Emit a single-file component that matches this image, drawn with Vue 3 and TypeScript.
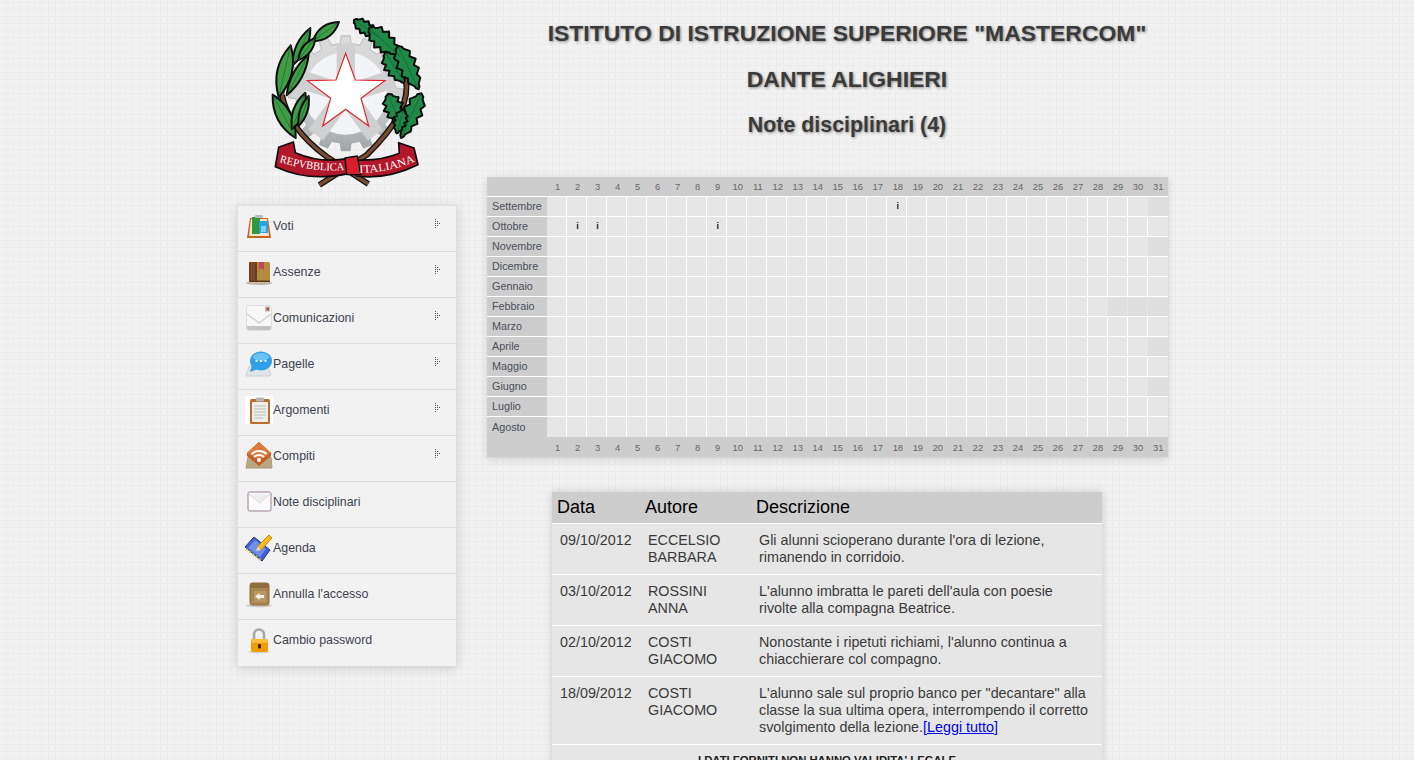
<script setup lang="ts">
type Leaf = [number, number, number, number, number];

const months: { name: string; marks: number[]; missing: number[] }[] = [
  { name: 'Settembre', marks: [18], missing: [31] },
  { name: 'Ottobre', marks: [2, 3, 9], missing: [] },
  { name: 'Novembre', marks: [], missing: [31] },
  { name: 'Dicembre', marks: [], missing: [] },
  { name: 'Gennaio', marks: [], missing: [] },
  { name: 'Febbraio', marks: [], missing: [29, 30, 31] },
  { name: 'Marzo', marks: [], missing: [] },
  { name: 'Aprile', marks: [], missing: [31] },
  { name: 'Maggio', marks: [], missing: [] },
  { name: 'Giugno', marks: [], missing: [31] },
  { name: 'Luglio', marks: [], missing: [] },
  { name: 'Agosto', marks: [], missing: [] },
];
const days = Array.from({ length: 31 }, (_, i) => i + 1);

const menu = [
  { label: 'Voti', icon: 'voti', arrow: true },
  { label: 'Assenze', icon: 'assenze', arrow: true },
  { label: 'Comunicazioni', icon: 'comunicazioni', arrow: true },
  { label: 'Pagelle', icon: 'pagelle', arrow: true },
  { label: 'Argomenti', icon: 'argomenti', arrow: true },
  { label: 'Compiti', icon: 'compiti', arrow: true },
  { label: 'Note disciplinari', icon: 'note', arrow: false },
  { label: 'Agenda', icon: 'agenda', arrow: false },
  { label: "Annulla l'accesso", icon: 'annulla', arrow: false },
  { label: 'Cambio password', icon: 'password', arrow: false },
];

const notes = [
  { date: '09/10/2012', author: ['ECCELSIO', 'BARBARA'], text: "Gli alunni scioperano durante l'ora di lezione, rimanendo in corridoio.", more: false },
  { date: '03/10/2012', author: ['ROSSINI', 'ANNA'], text: "L'alunno imbratta le pareti dell'aula con poesie rivolte alla compagna Beatrice.", more: false },
  { date: '02/10/2012', author: ['COSTI', 'GIACOMO'], text: "Nonostante i ripetuti richiami, l'alunno continua a chiacchierare col compagno.", more: false },
  { date: '18/09/2012', author: ['COSTI', 'GIACOMO'], text: 'L\'alunno sale sul proprio banco per "decantare" alla classe la sua ultima opera, interrompendo il corretto svolgimento della lezione.', more: true },
];

function polar(cx: number, cy: number, r: number, deg: number): string {
  const a = (deg * Math.PI) / 180;
  return `${(cx + r * Math.sin(a)).toFixed(1)},${(cy - r * Math.cos(a)).toFixed(1)}`;
}

const gearPath = (() => {
  const cx = 347, cy = 280, teeth = 16, ro = 173, ri = 150;
  const step = 360 / teeth;
  let d = '';
  for (let i = 0; i < teeth; i++) {
    const a = i * step;
    const pts = [
      polar(cx, cy, ri, a - step * 0.5),
      polar(cx, cy, ri, a - step * 0.28),
      polar(cx, cy, ro, a - step * 0.2),
      polar(cx, cy, ro, a + step * 0.2),
      polar(cx, cy, ri, a + step * 0.28),
    ];
    d += (i === 0 ? 'M' : 'L') + pts.join(' L');
  }
  return d + 'Z';
})();

const rayAngles = [0, 72, 144, 216, 288];

function oliveLeaf([x1, y1, x2, y2, w]: Leaf): string {
  const mx = (x1 + x2) / 2, my = (y1 + y2) / 2;
  const dx = x2 - x1, dy = y2 - y1, l = Math.hypot(dx, dy);
  const nx = (-dy / l) * w, ny = (dx / l) * w;
  return `M${x1},${y1} Q${mx + nx},${my + ny} ${x2},${y2} Q${mx - nx},${my - ny} ${x1},${y1}Z`;
}

function oakLeaf([x1, y1, x2, y2, w]: Leaf): string {
  const dx = x2 - x1, dy = y2 - y1, l = Math.hypot(dx, dy);
  const ux = dx / l, uy = dy / l, nx = -uy, ny = ux;
  const n = 20;
  const side = (s: number) => {
    const out: string[] = [];
    for (let i = 0; i <= n; i++) {
      const t = i / n;
      const env = Math.pow(Math.sin(Math.PI * Math.pow(t, 0.8)), 0.7);
      const lobe = 0.8 + 0.2 * Math.cos(t * Math.PI * 10);
      const h = (w / 2) * env * lobe * s;
      out.push(`${(x1 + dx * t + nx * h).toFixed(1)},${(y1 + dy * t + ny * h).toFixed(1)}`);
    }
    return out;
  };
  const a = side(1), b = side(-1).reverse();
  return 'M' + a.concat(b).join(' L') + 'Z';
}

const olives: Leaf[] = [
  [248, 124, 327, 66, 34],
  [188, 195, 241, 84, 30],
  [205, 180, 256, 114, 26],
  [146, 292, 182, 136, 44],
  [170, 286, 236, 164, 28],
  [197, 414, 128, 284, 42],
  [186, 388, 226, 278, 32],
  [206, 378, 236, 288, 22],
];
const oaks: Leaf[] = [
  [372, 60, 450, 114, 44],
  [418, 84, 510, 170, 66],
  [466, 158, 522, 248, 62],
  [503, 138, 566, 268, 64],
  [474, 282, 514, 380, 62],
  [574, 280, 513, 414, 60],
  [520, 330, 500, 400, 44],
];
const olivePaths = olives.map(oliveLeaf);
const oakPaths = oaks.map(oakLeaf);
const oliveRibs = olives.map(([a, b, c, d]) => `M${a},${b} L${c},${d}`);
const oakRibs = oaks.map(([a, b, c, d]) => `M${a},${b} L${c},${d}`);
</script>

<template>
  <div class="page">
    <aside class="side">
      <div class="logo">
        <svg class="emblem" viewBox="0 0 720 600" width="240" height="200" role="img" aria-label="Emblema della Repubblica Italiana">
          <defs>
            <linearGradient id="gearFill" x1="0" y1="0" x2="0" y2="1">
              <stop offset="0" stop-color="#dcdcdc" />
              <stop offset="0.6" stop-color="#cfd0d1" />
              <stop offset="1" stop-color="#9fa5a8" />
            </linearGradient>
            <path id="ribbonLeft" d="M148,486 Q250,518 346,510" />
            <path id="ribbonRight" d="M388,518 Q480,518 556,484" />
          </defs>
          <path :d="gearPath" fill="url(#gearFill)" stroke="#8e9093" stroke-width="1.5" />
          <circle cx="347" cy="280" r="124" fill="#f3f4f7" />
          <rect
            v-for="a in rayAngles"
            :key="a"
            x="320"
            y="130"
            width="55"
            height="152"
            fill="#cfd0d2"
            :transform="`rotate(${a} 347 282)`"
          />
          <polygon points="347,160 376,240 465,242 393,295 416,378 347,328 278,378 302,295 232,242 318,240" fill="#fff" stroke="#e0222c" stroke-width="3.5" />
          <path d="M156,285 Q175,385 290,470 L415,552" fill="none" stroke="#111" stroke-width="18" />
          <path d="M156,285 Q175,385 290,470 L415,552" fill="none" stroke="#7b4a32" stroke-width="10" />
          <path d="M526,235 Q550,330 410,465 L268,555" fill="none" stroke="#111" stroke-width="18" />
          <path d="M526,235 Q550,330 410,465 L268,555" fill="none" stroke="#7b4a32" stroke-width="10" />
          <path d="M160,285 Q170,200 250,115" fill="none" stroke="#6d4a30" stroke-width="5" />
          <path v-for="(p, i) in olivePaths" :key="'o' + i" :d="p" fill="#3f9e45" stroke="#0c0c0c" stroke-width="6" stroke-linejoin="round" />
          <path v-for="(p, i) in oliveRibs" :key="'or' + i" :d="p" stroke="#1c5d28" stroke-width="2" />
          <path v-for="(p, i) in oakPaths" :key="'a' + i" :d="p" fill="#1f8a47" stroke="#0c0c0c" stroke-width="6" stroke-linejoin="round" />
          <path v-for="(p, i) in oakRibs" :key="'ar' + i" :d="p" stroke="#0f5a2d" stroke-width="2" />
          <path d="M136,500 L146,442 L190,426 L196,458 Q270,490 352,476 L358,520 Q240,548 136,500Z" fill="#b3172a" stroke="#0c0c0c" stroke-width="5" stroke-linejoin="round" />
          <path d="M378,480 Q450,484 508,460 L506,428 L552,444 L564,494 Q470,540 378,528Z" fill="#b3172a" stroke="#0c0c0c" stroke-width="5" stroke-linejoin="round" />
          <path d="M345,474 L382,468 L392,524 L350,524 Z" fill="#d81f2e" stroke="#0c0c0c" stroke-width="4" stroke-linejoin="round" />
          <text class="motto"><textPath href="#ribbonLeft" textLength="198" lengthAdjust="spacingAndGlyphs">REPVBBLICA</textPath></text>
          <text class="motto"><textPath href="#ribbonRight" textLength="172" lengthAdjust="spacingAndGlyphs">ITALIANA</textPath></text>
        </svg>
      </div>

      <nav class="menu">
        <a v-for="item in menu" :key="item.label" class="menu-item">
          <svg class="icon" viewBox="0 0 28 28" width="28" height="28" aria-hidden="true">
            <template v-if="item.icon === 'voti'">
              <path d="M5,6 H23 L26,26 H2 Z" fill="#c9621a" />
              <path d="M6,7 H22 L24,24 H4 Z" fill="#f2e6d4" />
              <rect x="7" y="5" width="8" height="17" fill="#2f9a3d" />
              <rect x="14" y="9" width="9" height="12" fill="#28a3e0" />
              <rect x="16" y="14" width="5" height="6" fill="#7fd0f2" />
              <rect x="10" y="3" width="8" height="3" rx="1" fill="#b9bcbe" />
            </template>
            <template v-else-if="item.icon === 'assenze'">
              <ellipse cx="14" cy="25" rx="13" ry="2" fill="#c4b8ab" />
              <rect x="4" y="4" width="21" height="20" rx="2" fill="#b48a3e" />
              <rect x="4" y="4" width="8" height="20" rx="1" fill="#6a3d20" />
              <path d="M6.5,4 V24 M9,4 V24" stroke="#8f6338" />
              <path d="M14,4 H19 V12 L16.5,10 L14,12 Z" fill="#c2455a" />
              <rect x="5" y="22.5" width="20" height="1.5" fill="#5a3a1e" />
            </template>
            <template v-else-if="item.icon === 'comunicazioni'">
              <rect x="1.5" y="1.5" width="25" height="25" rx="3" fill="#f7f7f7" stroke="#dddddd" />
              <path d="M2,22 H26 V24 Q26,26 24,26 H4 Q2,26 2,24 Z" fill="#c4c4c4" />
              <path d="M2,10 L14,19 L26,10" fill="none" stroke="#cfcfcf" stroke-width="1.2" />
              <rect x="20" y="2.5" width="5" height="5" fill="#c4beb8" />
              <rect x="21.5" y="3.5" width="2.5" height="3" fill="#a2573f" />
            </template>
            <template v-else-if="item.icon === 'pagelle'">
              <path d="M4,16 H22 L26,24 Q26,26 24,26 H1 Z" fill="#e2e5e8" stroke="#cdd0d3" />
              <ellipse cx="16" cy="11" rx="11" ry="9.5" fill="#2f9fe6" />
              <ellipse cx="16" cy="7" rx="8" ry="4" fill="#6cc3f3" />
              <path d="M7,15 L5,22 L13,19 Z" fill="#2f9fe6" />
              <circle cx="11.5" cy="11" r="1.1" fill="#fff" />
              <circle cx="16" cy="11" r="1.1" fill="#fff" />
              <circle cx="20.5" cy="11" r="1.1" fill="#fff" />
            </template>
            <template v-else-if="item.icon === 'argomenti'">
              <rect width="28" height="28" fill="#fff" />
              <rect x="5" y="3" width="20" height="25" rx="1.5" fill="#b9702d" />
              <rect x="7" y="6" width="16" height="20" fill="#eeeeea" />
              <path d="M9,10 H21 M9,13 H21 M9,16 H21 M9,19 H21 M9,22 H18" stroke="#bdbdb8" />
              <rect x="11" y="1.5" width="8" height="4" rx="1" fill="#b4b4b4" />
            </template>
            <template v-else-if="item.icon === 'compiti'">
              <path d="M3,15 H26 L27,26 H1 Z" fill="#b9a683" stroke="#a99a78" />
              <path d="M14,0 L26,11 V14 L14,24 L2,14 V11 Z" fill="#c2602a" />
              <path d="M14,0 L26,11 L14,18 L2,11 Z" fill="#dd7a3a" />
              <path d="M6.5,12 A11,11 0 0 1 21.5,12 M9,15 A7,7 0 0 1 19,15" fill="none" stroke="#fff" stroke-width="2" />
              <circle cx="14" cy="18" r="2" fill="#fff" />
            </template>
            <template v-else-if="item.icon === 'note'">
              <rect x="3" y="4" width="23" height="19" rx="2" fill="#fbfbfb" stroke="#cfcfcf" />
              <rect x="3" y="4" width="23" height="19" rx="2" fill="none" stroke="#9db7d2" stroke-width="1.4" stroke-dasharray="2 2" />
              <rect x="3" y="4" width="23" height="19" rx="2" fill="none" stroke="#d49a9a" stroke-width="1.4" stroke-dasharray="2 2" stroke-dashoffset="2" />
              <path d="M4,6 L14.5,15 L25,6" fill="#efefef" stroke="#dadada" />
            </template>
            <template v-else-if="item.icon === 'agenda'">
              <path d="M0,13 L9,3 L25,16 L17,27 Z" fill="#3f63d3" stroke="#1c3489" />
              <path d="M3,14 L10,6 L21,15 L15,23 Z" fill="#6f8fe8" />
              <path d="M1,15 L17,27" stroke="#e2c33c" stroke-width="2" stroke-dasharray="2 2" />
              <path d="M13,12 L24,1 L27,4 L16,16 Z" fill="#f7b91c" stroke="#c98a0a" />
              <path d="M13,12 L16,16 L11,17 Z" fill="#f0d9a8" />
            </template>
            <template v-else-if="item.icon === 'annulla'">
              <ellipse cx="14" cy="25.5" rx="13" ry="1.8" fill="#cfcac3" />
              <rect x="5" y="3" width="19" height="22" rx="2.5" fill="#a9854f" stroke="#8a683a" />
              <rect x="5" y="3" width="19" height="5" rx="2" fill="#8f6d3d" />
              <rect x="9" y="11" width="12" height="11" fill="#b99866" />
              <path d="M10,16.5 L14.5,13 V15 H19 V18 H14.5 V20 Z" fill="#f4f1e8" />
            </template>
            <template v-else>
              <ellipse cx="14" cy="26" rx="11" ry="1.5" fill="#d5d5d5" />
              <path d="M9,14 V8.5 A5,5 0 0 1 19,8.5 V14" fill="none" stroke="#a8a8a8" stroke-width="2.6" />
              <rect x="6" y="13" width="17" height="13" rx="2" fill="#f29b0c" />
              <rect x="6" y="13" width="17" height="4" rx="2" fill="#fbbd3a" />
              <rect x="13" y="18" width="3" height="4.5" rx="1" fill="#3a2a10" />
            </template>
          </svg>
          <span class="menu-label">{{ item.label }}</span>
          <svg v-if="item.arrow" class="arrow" viewBox="0 0 6 10" width="6" height="10" aria-hidden="true">
            <path d="M0,0h1v1h-1zM0,2h1v1h-1zM0,4h1v1h-1zM0,6h1v1h-1zM0,8h1v1h-1zM2,2h1v1h-1zM2,4h1v1h-1zM2,6h1v1h-1zM4,4h1v1h-1z" fill="#555" />
          </svg>
        </a>
      </nav>
    </aside>

    <main class="content">
      <header class="titles">
        <h1>ISTITUTO DI ISTRUZIONE SUPERIORE "MASTERCOM"</h1>
        <h1>DANTE ALIGHIERI</h1>
        <h2>Note disciplinari (4)</h2>
      </header>

      <table class="calendar">
        <thead>
          <tr>
            <th class="corner"></th>
            <th v-for="d in days" :key="d">{{ d }}</th>
          </tr>
        </thead>
        <tbody>
          <tr v-for="m in months" :key="m.name">
            <th class="month">{{ m.name }}</th>
            <td
              v-for="d in days"
              :key="d"
              :class="{ missing: m.missing.includes(d), 'before-missing': m.missing.includes(d + 1) }"
            >
              <span v-if="m.marks.includes(d)" class="mark">i</span>
            </td>
          </tr>
        </tbody>
        <tfoot>
          <tr>
            <th class="corner"></th>
            <th v-for="d in days" :key="d">{{ d }}</th>
          </tr>
        </tfoot>
      </table>

      <table class="notes">
        <colgroup>
          <col class="c-date" />
          <col class="c-author" />
          <col class="c-text" />
        </colgroup>
        <thead>
          <tr>
            <th>Data</th>
            <th>Autore</th>
            <th>Descrizione</th>
          </tr>
        </thead>
        <tbody>
          <tr v-for="n in notes" :key="n.date + n.author[0]">
            <td>{{ n.date }}</td>
            <td>{{ n.author[0] }}<br />{{ n.author[1] }}</td>
            <td>{{ n.text }}<a v-if="n.more" href="#" class="more">[Leggi tutto]</a></td>
          </tr>
        </tbody>
        <tfoot>
          <tr>
            <td colspan="3">I DATI FORNITI NON HANNO VALIDITA' LEGALE</td>
          </tr>
        </tfoot>
      </table>
    </main>
  </div>
</template>

<style>
html,
body {
  margin: 0;
  background-color: #f2f2f2;
  background-image:
    linear-gradient(to right, #ececec 1px, transparent 1px),
    linear-gradient(to bottom, #ececec 1px, transparent 1px);
  background-size: 7px 7px;
  background-position: 6px 2px;
}
</style>

<style scoped>
.page {
  width: 940px;
  margin: 0 auto;
  display: flex;
  align-items: flex-start;
  font-family: "Liberation Sans", Arial, sans-serif;
  color: #3a3a3a;
}

.side {
  width: 220px;
  flex: none;
}

.logo {
  height: 205px;
  display: flex;
  justify-content: flex-start;
}

.emblem {
  display: block;
  margin-left: -7px;
  flex: none;
}

.motto {
  font-family: "Liberation Serif", serif;
  font-size: 33px;
  fill: #fff;
}

.menu {
  background: #f2f2f2;
  border: 1px solid #dedede;
  border-bottom: 0;
  box-shadow: 0 2px 10px rgba(0, 0, 0, 0.16);
}

.menu-item {
  height: 46px;
  box-sizing: border-box;
  border-bottom: 1px solid #dcdcdc;
  display: flex;
  align-items: center;
  padding: 0 0 5px 7px;
  color: #3d4350;
  font-size: 12.4px;
}

.menu-item:last-child {
  border-bottom-color: transparent;
}

.icon {
  flex: none;
  display: block;
}

.menu-label {
  flex: 1;
}

.arrow {
  margin: 0 15px 5px 0;
  flex: none;
}

.content {
  width: 720px;
  flex: none;
}

.titles {
  padding: 10px 0 0 60px;
  height: 177px;
  box-sizing: border-box;
  text-align: center;
  text-shadow: 1px 1px 3px #888;
}

.titles h1,
.titles h2 {
  margin: 0;
  height: 46px;
  line-height: 46px;
  white-space: nowrap;
  font-weight: bold;
}

.titles h1 {
  font-size: 22.95px;
}

.titles h2 {
  font-size: 21.4px;
  line-height: 47px;
}

.calendar {
  margin-left: 30px;
  border-collapse: separate;
  border-spacing: 0;
  table-layout: fixed;
  width: 681px;
  background: #e6e6e6;
  box-shadow: 0 2px 8px rgba(0, 0, 0, 0.15);
  font-size: 10.8px;
}

.calendar thead th,
.calendar tfoot th {
  height: 19px;
  padding: 0 0 0 1px;
  width: 20px;
  box-sizing: border-box;
  background: #cdcdcd;
  color: #666;
  font-size: 9.4px;
  font-weight: normal;
  text-align: center;
}

.calendar tfoot th {
  height: 20px;
}

.calendar .corner {
  width: 60px;
}

.calendar .month {
  height: 18px;
  padding: 0 0 1px 5px;
  background: #cdcdcd;
  border-top: 1px solid #fff;
  text-align: left;
  font-weight: normal;
  color: #4a4f5a;
  white-space: nowrap;
}

.calendar tbody td {
  padding: 0;
  height: 19px;
  border-top: 1px solid #fff;
  border-right: 1px solid #fff;
  text-align: center;
  font-size: 9px;
  line-height: 1;
}

.calendar tbody td:last-child {
  border-right: 0;
}

.calendar tbody tr:last-child th {
  height: 20px;
  padding-bottom: 0;
}

.calendar tbody tr:last-child td {
  height: 20px;
}

.calendar td.missing {
  background: #dfdfdf;
  border-right-color: #dfdfdf;
}

.calendar td.before-missing {
  border-right-color: #e6e6e6;
}

.mark {
  font-weight: bold;
  color: #222;
  padding-left: 2px;
}

.notes {
  margin: 35px 0 40px 95px;
  width: 550px;
  border-collapse: collapse;
  table-layout: fixed;
  background: #e6e6e6;
  box-shadow: 0 0 8px rgba(0, 0, 0, 0.18);
  font-size: 14.33px;
  line-height: 17px;
  color: #3a3a3a;
}

.c-date {
  width: 88px;
}

.c-author {
  width: 111px;
}

.c-text {
  width: 351px;
}

.notes thead th {
  background: #cdcdcd;
  color: #000;
  font-size: 18px;
  font-weight: normal;
  line-height: 21px;
  text-align: left;
  padding: 5px 5px;
  border-bottom: 1px solid #fff;
}

.notes tbody td {
  padding: 8px;
  vertical-align: top;
  border-bottom: 1px solid #fff;
}

.more {
  color: #00e;
  text-decoration: underline;
}

.notes tfoot td {
  padding: 7px 8px;
  text-align: center;
  font-weight: bold;
  font-size: 11.3px;
  color: #222;
  height: 40px;
  vertical-align: top;
}
</style>
